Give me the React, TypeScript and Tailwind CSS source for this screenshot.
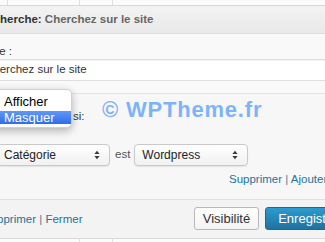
import React from "react";

const Arrows = () => (
  <svg width="6" height="10" viewBox="0 0 6 10" className="shrink-0">
    <path d="M3 0.8 L5.6 4 L0.4 4 Z M3 9.2 L0.4 6 L5.6 6 Z" fill="#3a3a3a" />
  </svg>
);

const Select = ({ label, className }: { label: string; className: string }) => (
  <div
    className={`h-[22px] w-[114px] shrink-0 flex items-center justify-between pl-[7px] pr-[9px] rounded-[4px] border border-[#c9c9c9] bg-gradient-to-b from-white to-[#f1f1f1] shadow-[0_1px_1px_rgba(0,0,0,0.08)] text-[12px] text-[#222] ${className}`}
  >
    <span className="whitespace-nowrap">{label}</span>
    <Arrows />
  </div>
);

export default function App() {
  return (
    <div className="relative w-[325px] h-[242px] overflow-hidden bg-[#f8f8f8] font-['Liberation_Sans',Arial,sans-serif]">
      {/* top strip */}
      <div className="h-[6px] flex border-b border-[#d9d9d9] bg-[#fbfbfb]">
        <div className="w-[8px] border-r border-[#e0e0e0]" />
        <div className="w-[72px] border-r border-[#e0e0e0]" />
        <div className="w-[33px] border-r border-[#e0e0e0]" />
      </div>
      {/* header */}
      <div className="h-[28px] flex items-center border-b border-[#dcdcdc] bg-gradient-to-b from-[#f3f3f3] to-[#e9e9e9]">
        <span className="-ml-[21px] whitespace-nowrap text-[11.5px] font-bold text-[#333]">
          Recherche: <span className="text-[#666]">Cherchez sur le site</span>
        </span>
      </div>
      {/* section 1 */}
      <div className="pt-[10px] pb-[12px] border-b border-[#e3e3e3] bg-[#f9f9f9]">
        <div className="h-[15px] flex items-center">
          <span className="-ml-[17px] whitespace-nowrap text-[11.5px] text-[#333]">Titre :</span>
        </div>
        <div className="h-[22px] -ml-[20px] w-[360px] flex items-center pl-[4px] bg-white border border-[#dfdfdf] shadow-[inset_0_1px_1px_rgba(0,0,0,0.05)]">
          <span className="whitespace-nowrap text-[11.5px] text-[#333]">Cherchez sur le site</span>
        </div>
      </div>
      {/* section 2 */}
      <div className="pt-[15px] pb-[12px] border-b border-[#e1e1e1] bg-[#f7f7f7]">
        <div className="h-[16px] flex items-center pl-[73px]">
          <span className="text-[11.5px] text-[#333]">si:</span>
        </div>
        <div className="mt-[19px] h-[22px] flex items-center">
          <Select label="Catégorie" className="-ml-[4px]" />
          <span className="ml-[5px] text-[11.5px] text-[#555]">est</span>
          <Select label="Wordpress" className="ml-[4px]" />
        </div>
        <div className="mt-[7px] h-[14px] flex items-center pl-[229px]">
          <span className="whitespace-nowrap text-[11.5px] text-[#21759b]">
            Supprimer <span className="text-[#557a8c]">|</span> Ajouter
          </span>
        </div>
      </div>
      {/* footer */}
      <div className="h-[39px] border-b border-[#dadada] bg-[#f3f3f3] pt-[7px]">
        <div className="w-[355px] h-[23px] flex items-center justify-between">
          <span className="-ml-[17px] mt-[3px] whitespace-nowrap text-[11.5px] text-[#21759b]">
            Supprimer <span className="text-[#557a8c]">|</span> Fermer
          </span>
          <div className="flex gap-[6px]">
            <div className="w-[65px] h-[23px] flex items-center justify-center rounded-[3px] border border-[#b8b8b8] bg-gradient-to-b from-white to-[#f3f3f3] text-[13px] text-[#333]">
              Visibilité
            </div>
            <div className="w-[90px] h-[23px] flex items-center justify-center rounded-[3px] border border-[#1e6a8d] bg-gradient-to-b from-[#2c9bd0] to-[#1f739e] text-[13px] text-white">
              Enregistrer
            </div>
          </div>
        </div>
      </div>
      {/* bottom strip */}
      <div className="h-[4px] flex bg-[#fbfbfb]">
        <div className="w-[80px] border-r border-[#e0e0e0]" />
        <div className="w-[33px] border-r border-[#e0e0e0]" />
      </div>

      {/* watermark */}
      <div className="absolute left-[102px] top-[99px] whitespace-nowrap text-[22px] leading-[22px] font-bold tracking-[0.8px] text-[#7fb3f7]">
        © WPTheme.fr
      </div>

      {/* dropdown menu */}
      <div className="absolute -left-[10px] top-[89px] w-[82px] pt-[4px] pb-[3px] rounded-[5px] bg-white border border-[#d0d0d0] shadow-[0_3px_9px_rgba(0,0,0,0.28)]">
        <div className="h-[16px] flex items-center pl-[13px] text-[13px] text-black">Afficher</div>
        <div className="mt-[1px] h-[13px] flex items-center pl-[13px] text-[13px] text-white bg-gradient-to-b from-[#6198f5] to-[#2f6ceb]">
          Masquer
        </div>
      </div>
    </div>
  );
}
